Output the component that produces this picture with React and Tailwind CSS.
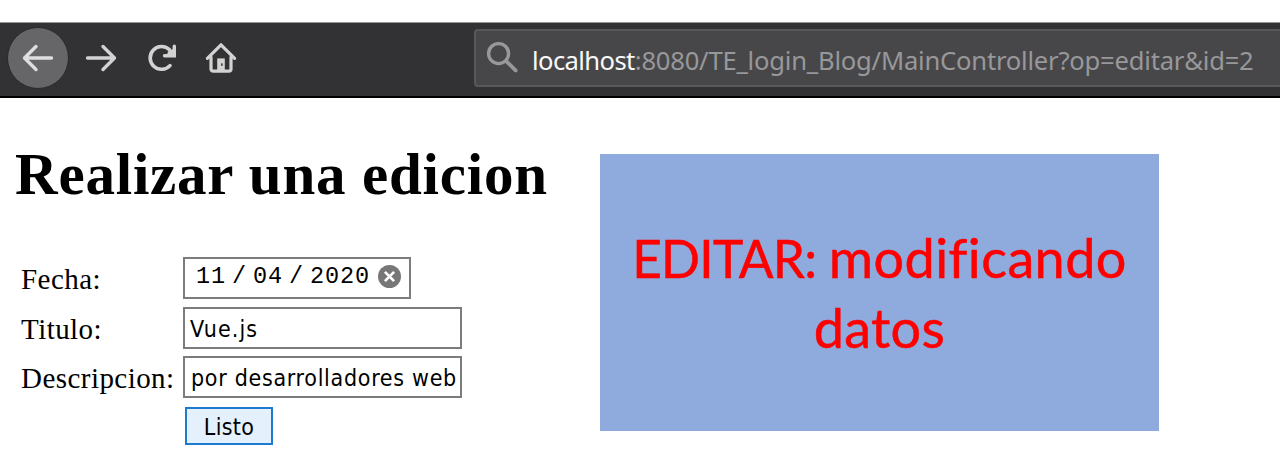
function BackIcon() {
  return (
    <svg viewBox="0 0 32 28" className="h-7 w-8" fill="none" stroke="#dededf" strokeWidth="3.4" strokeLinecap="round" strokeLinejoin="round">
      <path d="M29.5 14H2.5M14 2.5 2.5 14 14 25.5" />
    </svg>
  );
}

function ForwardIcon() {
  return (
    <svg viewBox="0 0 32 28" className="h-7 w-8" fill="none" stroke="#d2d2d3" strokeWidth="3.4" strokeLinecap="round" strokeLinejoin="round">
      <path d="M2.5 14h27M18 2.5 29.5 14 18 25.5" />
    </svg>
  );
}

function ReloadIcon() {
  return (
    <svg viewBox="0 0 30 28" className="h-7 w-[30px]" fill="none" stroke="#d2d2d3" strokeWidth="3.6" strokeLinecap="round">
      <path d="M23 21.6A11.4 11.4 0 1 1 22.6 5.8" />
      <path d="M27.3 2.2v9.6H17.5" strokeWidth="3.4" />
      <path d="M21 7.5 26 5v6h-6z" fill="#d2d2d3" stroke="none" />
    </svg>
  );
}

function HomeIcon() {
  return (
    <svg viewBox="0 0 32 32" className="h-8 w-8" fill="none" stroke="#d2d2d3" strokeWidth="3.2" strokeLinecap="round" strokeLinejoin="round">
      <path d="M2.4 16.4 16 2.8 29.6 16.4" />
      <path d="M6 15V27a2.2 2.2 0 0 0 2.2 2.2h15.6A2.2 2.2 0 0 0 26 27V15" />
      <path d="M12.2 16.4h7.6V29h-7.6z" fill="#d2d2d3" stroke="none" />
      <rect x="16" y="21.4" width="1.8" height="2.4" fill="#4a4a4c" stroke="none" />
    </svg>
  );
}

function SearchIcon() {
  return (
    <svg viewBox="0 0 32 32" className="h-8 w-8" fill="none" stroke="#98989a" strokeWidth="3.4" strokeLinecap="round">
      <circle cx="12.6" cy="12.6" r="10" />
      <path d="M20.2 20.2 29.6 29.4" strokeWidth="3.8" />
    </svg>
  );
}

function ClearIcon() {
  return (
    <svg viewBox="0 0 24 24" className="h-[23px] w-[23px]">
      <circle cx="12" cy="12" r="12" fill="#777777" />
      <path d="M7.2 7.2l9.6 9.6M16.8 7.2l-9.6 9.6" stroke="#fff" strokeWidth="2.8" />
    </svg>
  );
}

function Toolbar() {
  return (
    <header className="flex h-[76px] items-start border-t border-b-2 border-t-[#97979a] border-b-black bg-[#323234]">
      <nav className="flex w-[474px] shrink-0 items-center pt-[4px] pl-[7px]">
        <button className="flex h-[62px] w-[62px] items-center justify-center rounded-full border border-[#29292b] bg-[#666668]">
          <BackIcon />
        </button>
        <button className="ml-[16px]"><ForwardIcon /></button>
        <button className="ml-[30px]"><ReloadIcon /></button>
        <button className="ml-[28px]"><HomeIcon /></button>
      </nav>
      <div className="mt-[6px] flex h-[58px] flex-1 items-center rounded-l-[4px] border-2 border-r-0 border-[#58585a] bg-[#474749] pl-[10px] font-['Noto_Sans',sans-serif] text-[25.6px] leading-[36px] whitespace-nowrap">
        <div className="-mt-[3px] shrink-0"><SearchIcon /></div>
        <div className="mt-[5px] ml-[14px] text-[#98989a]">
          <span className="tracking-[-0.6px] text-[#f9f9fa]">localhost</span>
          <span className="tracking-[-0.21px]">:8080/TE_login_Blog/MainController?op=editar&amp;id=2</span>
        </div>
      </div>
    </header>
  );
}

function Row({ label, children }) {
  return (
    <div className="flex h-[49.5px] items-start">
      <label className="w-[163px] shrink-0 pt-[5px] pl-[1px] font-['Liberation_Serif',serif] text-[29px] leading-[34px] tracking-[0.45px] whitespace-nowrap">{label}</label>
      {children}
    </div>
  );
}

const field = "flex h-[42px] items-center border-2 border-[#7c7c7c] bg-white whitespace-nowrap";
const tahoma = "font-['DejaVu_Sans_Condensed','DejaVu_Sans',sans-serif] text-[23px] leading-[28px]";

export default function App() {
  return (
    <div className="h-[466px] w-[1280px] overflow-hidden bg-white pt-[22px] text-black">
      <Toolbar />
      <main className="flex items-start">
        <section className="w-[600px] shrink-0 pt-[42px] pl-[16px]">
          <h1 className="-ml-px font-['Liberation_Serif',serif] text-[59px] leading-[68px] font-bold tracking-[0.8px] whitespace-nowrap">Realizar una edicion</h1>
          <form className="mt-[49px] pl-[4px]">
            <Row label="Fecha:">
              <div className={`${field} w-[228px] pl-[11px] font-['Liberation_Mono',monospace] text-[23.5px] leading-[28px] tracking-[0.9px]`}>
                <div className="-mt-[3px] flex items-center">
                  <span className="w-[30px]">11</span>
                  <span className="w-[27px] pl-[6px]">/</span>
                  <span className="w-[30px]">04</span>
                  <span className="w-[27px] pl-[6px]">/</span>
                  <span className="w-[60px]">2020</span>
                  <span className="ml-[8px]"><ClearIcon /></span>
                </div>
              </div>
            </Row>
            <Row label="Titulo:">
              <div className={`${field} ${tahoma} w-[279px] pt-[2px] pl-[5px] tracking-[1.1px]`}>Vue.js</div>
            </Row>
            <Row label="Descripcion:">
              <div className={`${field} ${tahoma} w-[279px] pt-[2px] pl-[6px] tracking-[0.7px]`}>por desarrolladores web</div>
            </Row>
            <div className="pt-[1px] pl-[165px]">
              <button type="button" className={`${tahoma} flex h-[38px] w-[88px] items-center justify-center border-2 border-[#1c7ad0] bg-[#e4f0fb] pt-[3px] tracking-[0.3px]`}>Listo</button>
            </div>
          </form>
        </section>
        <aside className="mt-[56px] flex h-[277px] w-[559px] flex-col items-center justify-center bg-[#8faadc] font-['Lato',sans-serif] text-[54px] leading-[70px] whitespace-nowrap text-[#fe0000] [-webkit-text-stroke:0.5px_#fe0000]">
          <p>
            <span className="text-[51.4px] tracking-[-0.8px]">EDITAR: </span>
            <span className="tracking-[0.4px]">modificando</span>
          </p>
          <p className="tracking-[0.3px]">datos</p>
        </aside>
      </main>
    </div>
  );
}
